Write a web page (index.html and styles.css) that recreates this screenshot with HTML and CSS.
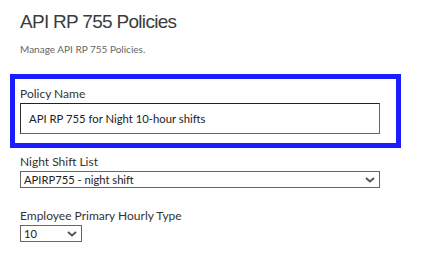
FILE: index.html
```html
<!DOCTYPE html>
<html>
<head>
<meta charset="utf-8">
<link rel="stylesheet" href="styles.css">
</head>
<body>
<div class="page">
  <h1 class="title">API RP 755 Policies</h1>
  <p class="subtitle">Manage API RP 755 Policies.</p>
  <div class="highlight">
    <label class="label">Policy Name</label>
    <div class="text-input">API RP 755 for Night 10-hour shifts</div>
  </div>
  <div class="field">
    <label class="label">Night Shift List</label>
    <div class="select wide"><span>APIRP755 - night shift</span><svg class="chev" width="10" height="6" viewBox="0 0 10 6"><path d="M1 1 L5 4.5 L9 1" fill="none" stroke="#555" stroke-width="2"/></svg></div>
  </div>
  <div class="field second">
    <label class="label">Employee Primary Hourly Type</label>
    <div class="select narrow"><span>10</span><svg class="chev" width="10" height="6" viewBox="0 0 10 6"><path d="M1 1 L5 4.5 L9 1" fill="none" stroke="#555" stroke-width="2"/></svg></div>
  </div>
</div>
</body>
</html>
```
FILE: styles.css
```css
html, body { margin: 0; padding: 0; background: #fff; }
.page {
  padding: 10px 0 0 20px;
  font-family: Lato, "Open Sans", sans-serif;
  color: #333;
}
.title {
  margin: 0;
  font-family: "Liberation Sans", Arial, sans-serif;
  font-weight: normal;
  font-size: 19px;
  letter-spacing: -0.7px;
  line-height: 24px;
  color: #3c3c3c;
}
.subtitle {
  margin: 9px 0 0 0;
  font-size: 10px;
  line-height: 12px;
  color: #666;
}
.highlight {
  margin: 19px 0 0 -10px;
  width: 371px;
  border: 5px solid #1c1cff;
  padding: 7px 5px 9px 5px;
  display: flex;
  flex-direction: column;
}
.label {
  font-size: 12px;
  line-height: 16px;
  color: #333;
}
.text-input {
  margin-top: 1px;
  width: 350px;
  height: 29px;
  padding: 0 0 0 8px;
  border: 1px solid #666;
  border-top-color: #222;
  border-left-color: #333;
  font-size: 11.3px;
  line-height: 29px;
  color: #222;
}
.field {
  margin-top: 6px;
  display: flex;
  flex-direction: column;
}
.second { margin-top: 20px; }
.select {
  margin-top: 1px;
  box-sizing: border-box;
  height: 17px;
  border: 1px solid #666;
  display: flex;
  align-items: center;
  justify-content: space-between;
  padding: 0 4px 0 3px;
  font-size: 11.2px;
  color: #222;
}
.wide { width: 360px; }
.narrow { width: 62px; }
.chev { display: block; }
```
